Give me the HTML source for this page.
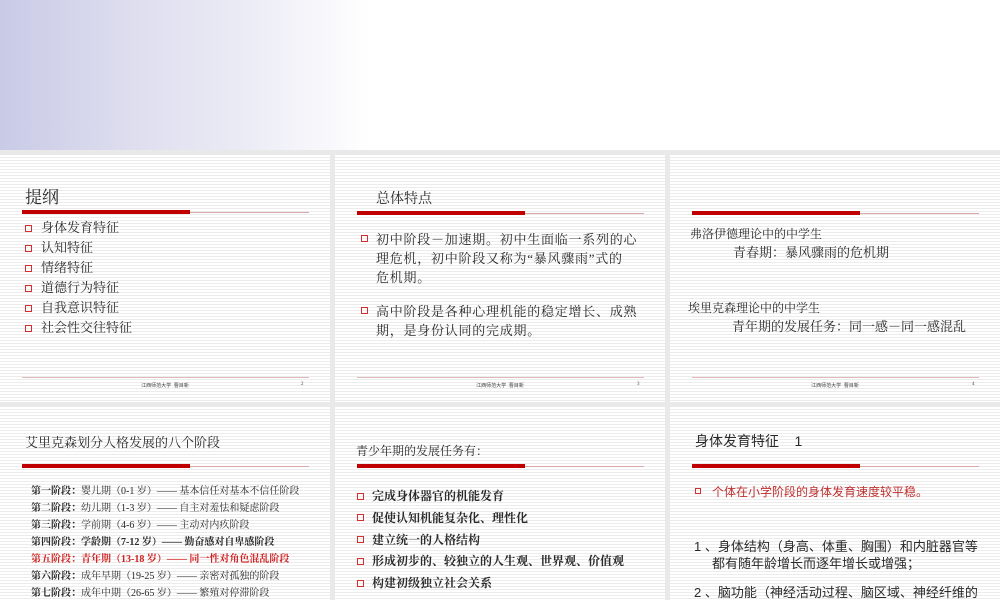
<!DOCTYPE html>
<html><head><meta charset="utf-8"><style>
*{margin:0;padding:0;box-sizing:border-box}
body{width:1000px;height:600px;overflow:hidden;background:#e9e9e9;position:relative;font-family:"Liberation Serif","Noto Serif CJK SC",serif;color:#2a2a2a}
.top{position:absolute;left:0;top:0;width:1000px;height:150px;background:linear-gradient(90deg,#c9cae6 0,#dcdcee 120px,#ececf6 250px,#fff 370px,#fff 1000px)}
.s{position:absolute;overflow:hidden;background:repeating-linear-gradient(180deg,#fff 0,#fff 2px,#ececec 2px,#ececec 3px)}
.t{position:absolute;white-space:nowrap;line-height:1}
.bar{position:absolute;height:4px;background:#c00000;width:168px}
.thin{position:absolute;height:1px;background:#d9a8a8}
.fl{position:absolute;height:1px;background:#e0b8b8;left:22px;width:287px;top:222px}
.ft{position:absolute;top:227px;font-size:5px;left:0;width:330px;text-align:center;font-family:"Liberation Sans","Noto Sans CJK SC",sans-serif;color:#444}
.pn{position:absolute;top:227px;font-size:5px;color:#444}
.b{position:absolute;width:7px;height:7px;border:1.3px solid #d03030}
.sans{font-family:"Liberation Sans","Noto Sans CJK SC",sans-serif}
.p{position:absolute;left:41px;width:285px;font-size:13px;line-height:19px;letter-spacing:0.75px}
</style></head><body>
<div class="top"></div>

<div class="s" style="left:0;top:155px;width:330px;height:247px">
<div class="t" style="left:25px;top:34px;font-size:17px">提纲</div>
<div class="bar" style="left:22px;top:55px"></div><div class="thin" style="left:190px;width:119px;top:57px"></div>
<div class="b" style="left:25px;top:70px"></div><div class="t" style="left:41px;top:66px;font-size:13px">身体发育特征</div>
<div class="b" style="left:25px;top:90px"></div><div class="t" style="left:41px;top:86px;font-size:13px">认知特征</div>
<div class="b" style="left:25px;top:110px"></div><div class="t" style="left:41px;top:106px;font-size:13px">情绪特征</div>
<div class="b" style="left:25px;top:130px"></div><div class="t" style="left:41px;top:126px;font-size:13px">道德行为特征</div>
<div class="b" style="left:25px;top:150px"></div><div class="t" style="left:41px;top:146px;font-size:13px">自我意识特征</div>
<div class="b" style="left:25px;top:170px"></div><div class="t" style="left:41px;top:166px;font-size:13px">社会性交往特征</div>
<div class="fl"></div><div class="ft">江西师范大学&nbsp; 曹目新</div><div class="pn" style="left:301px">2</div>
</div>

<div class="s" style="left:335px;top:155px;width:330px;height:247px">
<div class="t" style="left:41px;top:38px;font-size:14px">总体特点</div>
<div class="bar" style="left:22px;top:56px"></div><div class="thin" style="left:190px;width:119px;top:58px"></div>
<div class="b" style="left:26px;top:80px"></div>
<div class="p" style="top:75px">初中阶段－加速期。初中生面临一系列的心<br>理危机，初中阶段又称为“暴风骤雨”式的<br>危机期。</div>
<div class="b" style="left:26px;top:152px"></div>
<div class="p" style="top:147px">高中阶段是各种心理机能的稳定增长、成熟<br>期，是身份认同的完成期。</div>
<div class="fl"></div><div class="ft">江西师范大学&nbsp; 曹目新</div><div class="pn" style="left:302px">3</div>
</div>

<div class="s" style="left:670px;top:155px;width:330px;height:247px">
<div class="bar" style="left:22px;top:56px"></div><div class="thin" style="left:190px;width:119px;top:58px"></div>
<div class="t" style="left:20px;top:73px;font-size:12px">弗洛伊德理论中的中学生</div>
<div class="t" style="left:63px;top:91px;font-size:13px">青春期：暴风骤雨的危机期</div>
<div class="t" style="left:18px;top:147px;font-size:12px">埃里克森理论中的中学生</div>
<div class="t" style="left:62px;top:165px;font-size:13px">青年期的发展任务：同一感－同一感混乱</div>
<div class="fl"></div><div class="ft">江西师范大学&nbsp; 曹目新</div><div class="pn" style="left:302px">4</div>
</div>

<div class="s" style="left:0;top:407px;width:330px;height:193px">
<div class="t" style="left:25px;top:29px;font-size:13px">艾里克森划分人格发展的八个阶段</div>
<div class="bar" style="left:22px;top:57px"></div><div class="thin" style="left:190px;width:119px;top:59px"></div>
<div style="position:absolute;left:31px;top:76px;font-size:10px;line-height:17px;white-space:nowrap">
<div><b>第一阶段：</b>婴儿期（0-1 岁）—— 基本信任对基本不信任阶段</div>
<div><b>第二阶段：</b>幼儿期（1-3 岁）—— 自主对羞怯和疑虑阶段</div>
<div><b>第三阶段：</b>学前期（4-6 岁）—— 主动对内疚阶段</div>
<div><b>第四阶段：学龄期（7-12 岁）—— 勤奋感对自卑感阶段</b></div>
<div style="color:#d02020"><b>第五阶段：青年期（13-18 岁）—— 同一性对角色混乱阶段</b></div>
<div><b>第六阶段：</b>成年早期（19-25 岁）—— 亲密对孤独的阶段</div>
<div><b>第七阶段：</b>成年中期（26-65 岁）—— 繁殖对停滞阶段</div>
</div>
</div>

<div class="s" style="left:335px;top:407px;width:330px;height:193px">
<div class="t" style="left:21px;top:38px;font-size:12px">青少年期的发展任务有：</div>
<div class="bar" style="left:22px;top:57px"></div><div class="thin" style="left:190px;width:119px;top:59px"></div>
<div style="position:absolute;left:37px;top:79px;font-size:12px;line-height:21.8px;font-weight:bold;white-space:nowrap">
<div>完成身体器官的机能发育</div><div>促使认知机能复杂化、理性化</div><div>建立统一的人格结构</div><div>形成初步的、较独立的人生观、世界观、价值观</div><div>构建初级独立社会关系</div></div>
<div class="b" style="left:22px;top:86px"></div><div class="b" style="left:22px;top:107px"></div><div class="b" style="left:22px;top:129px"></div><div class="b" style="left:22px;top:151px"></div><div class="b" style="left:22px;top:173px"></div>
</div>

<div class="s" style="left:670px;top:407px;width:330px;height:193px">
<div class="t sans" style="left:25px;top:27px;font-size:14px">身体发育特征&nbsp;&nbsp;&nbsp;&nbsp;1</div>
<div class="bar" style="left:22px;top:57px"></div><div class="thin" style="left:190px;width:119px;top:59px"></div>
<div class="b" style="left:25px;top:81px;width:6px;height:6px"></div>
<div class="t sans" style="left:42px;top:79px;font-size:12px;color:#c03030">个体在小学阶段的身体发育速度较平稳。</div>
<div class="t sans" style="left:24px;top:133px;font-size:13px">1 、身体结构（身高、体重、胸围）和内脏器官等</div>
<div class="t sans" style="left:42px;top:150px;font-size:13px">都有随年龄增长而逐年增长或增强；</div>
<div class="t sans" style="left:24px;top:179px;font-size:13px">2 、脑功能（神经活动过程、脑区域、神经纤维的</div>
</div>
</body></html>
